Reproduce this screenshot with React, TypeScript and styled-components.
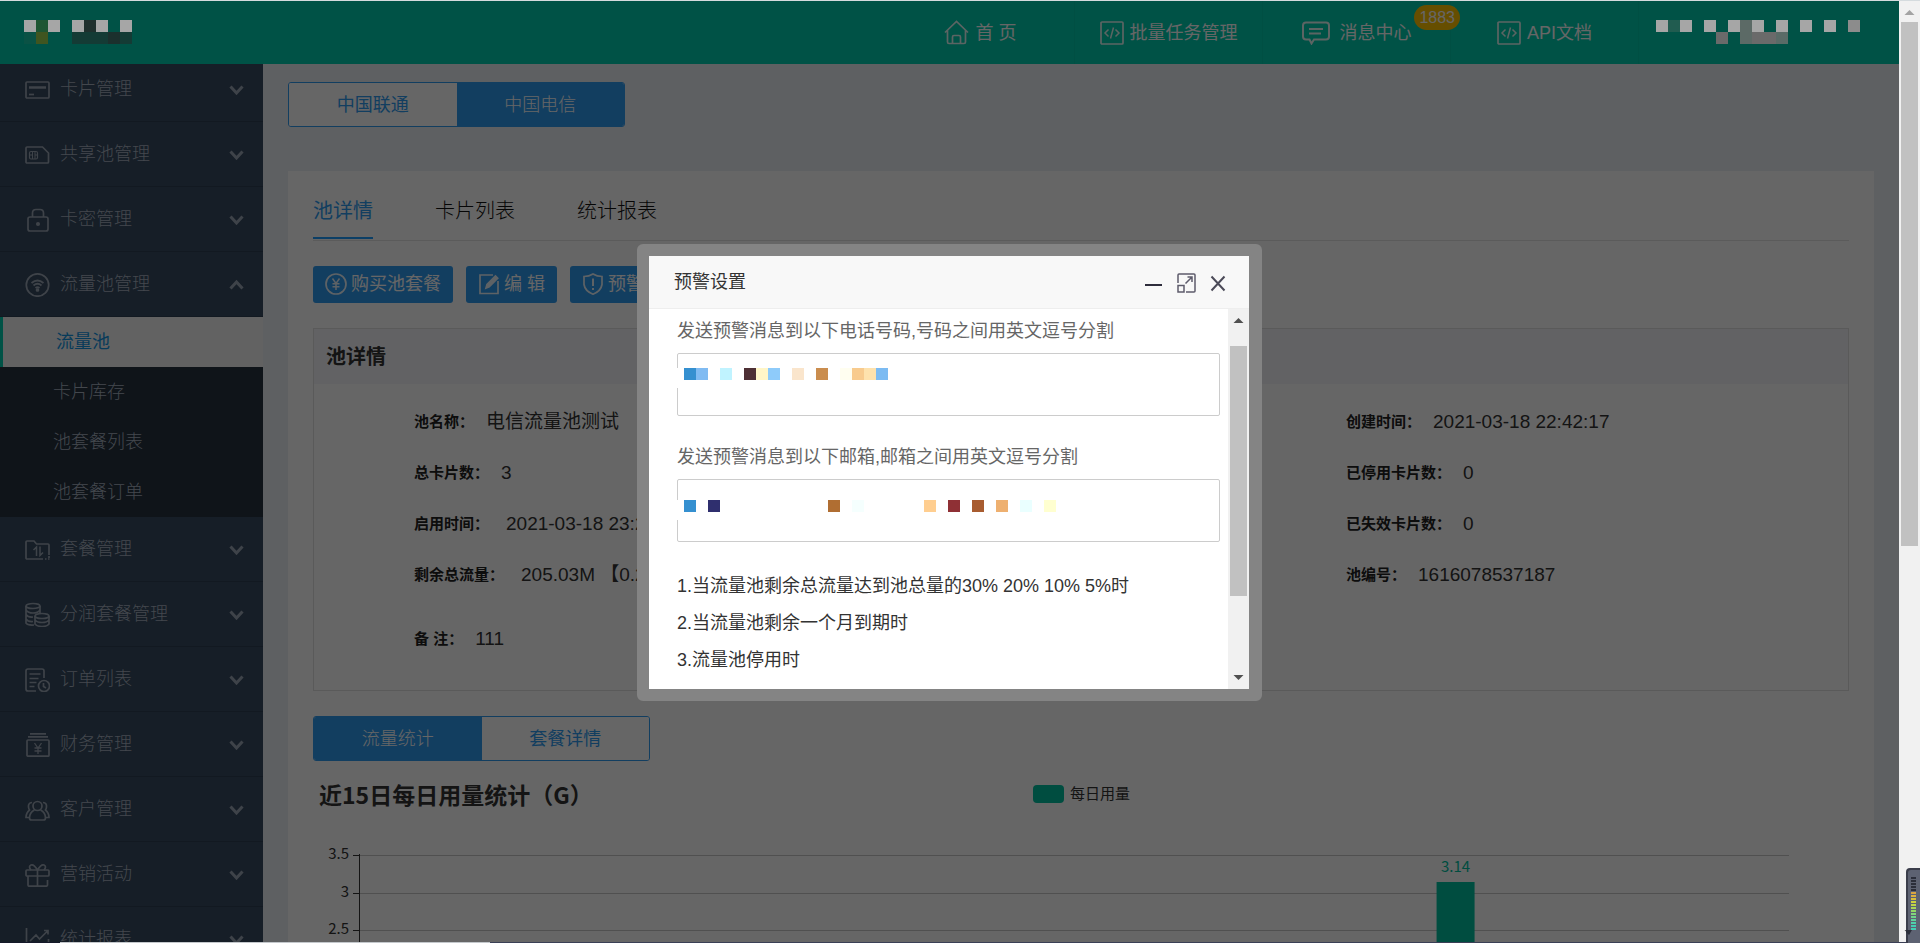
import React from 'react';
import styled, { createGlobalStyle } from 'styled-components';

const GlobalStyle = createGlobalStyle`
  *, *::before, *::after { box-sizing: border-box; }
  html, body { margin: 0; padding: 0; }
  body {
    font-family: "Liberation Sans", "Noto Sans CJK SC", sans-serif;
    font-size: 18px;
    line-height: 24px;
    color: #333;
  }
  a { color: inherit; text-decoration: none; }
  button, textarea { font: inherit; }
  button { cursor: pointer; }
`;

const Root = styled.div`
  display: grid;
  grid-template-columns: minmax(0, 1fr) 21px;
  height: 100vh;
  overflow: hidden;
  border-top: 1px solid #d5dbde;
`;

const Page = styled.div`
  display: flex;
  flex-direction: column;
  min-height: 0;
  background: #ebeff4;
`;

/* Header */
const Header = styled.header`
  display: flex;
  align-items: stretch;
  height: 63px;
  flex: none;
  background: #00cdaf;
  color: #fff;
`;

const Brand = styled.div`
  padding: 19px 0 0 24px;
  flex: 1;
`;

const Nav = styled.nav`
  display: flex;
`;

const NavLink = styled.a<{ $gap?: number }>`
  display: flex;
  align-items: center;
  justify-content: center;
  gap: ${(p) => p.$gap ?? 6}px;
  width: 188px;
  border-right: 1px solid #00c5a7;
  position: relative;
`;

const Badge = styled.span`
  position: absolute;
  top: 4px;
  right: -10px;
  z-index: 1;
  height: 25px;
  padding: 0 5px;
  border-radius: 13px;
  background: #ffc400;
  font-size: 16px;
  line-height: 25px;
`;

const Account = styled.div`
  width: 260px;
  padding: 19px 0 0 17px;
`;

/* Blocks that hide private text */
const MosaicGrid = styled.div`
  display: grid;
  grid-auto-rows: 12px;
  position: relative;
  z-index: 20;
  pointer-events: none;
`;

const MosaicRow = styled.div`
  display: flex;
`;

const MosaicCell = styled.i<{ $color: string }>`
  width: 12px;
  height: 12px;
  background: ${(p) => p.$color};
`;

function Mosaic({ rows }: { rows: Array<Record<number, string>> }) {
  return (
    <MosaicGrid aria-hidden="true">
      {rows.map((row, r) => {
        const last = Math.max(...Object.keys(row).map(Number));
        return (
          <MosaicRow key={r}>
            {Array.from({ length: last + 1 }, (_, i) => (
              <MosaicCell key={i} $color={row[i] ?? 'transparent'} />
            ))}
          </MosaicRow>
        );
      })}
    </MosaicGrid>
  );
}

/* Sidebar */
const Body = styled.div`
  display: flex;
  flex: 1;
  min-height: 0;
`;

const Sidebar = styled.aside`
  width: 263px;
  flex: none;
  overflow: hidden;
  background: #374b61;
  color: #a8b2c0;
  font-weight: 300;
`;

const MenuList = styled.ul`
  list-style: none;
  margin: -7px 0 0;
  padding: 0;
`;

const MenuItem = styled.a`
  display: flex;
  align-items: center;
  height: 65px;
  padding: 0 19px 0 25px;
  border-bottom: 1px solid #2f4054;
`;

const MenuText = styled.span`
  flex: 1;
  margin-left: 10px;
`;

const SubList = styled.ul`
  list-style: none;
  margin: 0;
  padding: 0;
  background: #263340;
`;

const SubLink = styled.a<{ $active?: boolean }>`
  display: block;
  height: 50px;
  padding-left: 53px;
  line-height: 50px;
  ${(p) =>
    p.$active &&
    `background: #f4f5f6; color: #1393e0; border-left: 3px solid #00cdaf; font-weight: 400;`}
`;

/* Content */
const Main = styled.main`
  flex: 1;
  min-width: 0;
  overflow: hidden;
  padding: 18px 25px 0;
`;

const Segmented = styled.div`
  display: inline-flex;
  width: 337px;
  height: 45px;
  border: 1px solid #2e9bf0;
  border-radius: 3px;
  background: #fff;
  overflow: hidden;
  vertical-align: top;
`;

const Segment = styled.button<{ $active?: boolean }>`
  flex: 1;
  border: 0;
  padding: 0;
  background: ${(p) => (p.$active ? '#2e9bf0' : '#fff')};
  color: ${(p) => (p.$active ? '#fff' : '#2e9bf0')};
  font-weight: ${(p) => (p.$active ? 300 : 400)};
`;

const Panel = styled.section`
  margin-top: 44px;
  padding: 14px 25px 0;
  background: #fff;
`;

const Tabs = styled.div`
  display: flex;
  gap: 62px;
  padding-bottom: 1px;
  border-bottom: 1px solid #e4e4e4;
`;

const Tab = styled.button<{ $active?: boolean }>`
  height: 54px;
  padding: 0;
  border: 0;
  border-bottom: 2px solid ${(p) => (p.$active ? '#1e9fff' : 'transparent')};
  background: none;
  color: ${(p) => (p.$active ? '#2e9bf0' : '#111')};
  font-size: 20px;
  font-weight: ${(p) => (p.$active ? 400 : 300)};
`;

const Toolbar = styled.div`
  display: flex;
  gap: 13px;
  margin-top: 25px;
`;

const ToolButton = styled.button`
  display: flex;
  align-items: center;
  gap: 4px;
  height: 37px;
  padding: 0 12px 2px;
  border: 0;
  border-radius: 3px;
  background: #2e9bf0;
  color: #fff;
`;

const Card = styled.section`
  margin-top: 25px;
  border: 1px solid #e0e0e0;
`;

const CardTitle = styled.h2`
  margin: 0;
  height: 55px;
  padding-left: 12px;
  background: #f4f6fa;
  font-size: 20px;
  line-height: 56px;
`;

const Details = styled.dl`
  display: grid;
  grid-template-columns: 932fr 502fr;
  grid-auto-rows: 51px;
  margin: 0;
  padding: 12px 0 27px 100px;
  height: 306px;
`;

const Detail = styled.div<{ $last?: boolean }>`
  display: flex;
  align-items: center;
  gap: 12px;
  margin-top: ${(p) => (p.$last ? 26 : 0)}px;
  min-width: 0;
`;

const DetailLabel = styled.dt`
  color: #222;
  font-size: 15px;
  font-weight: bold;
`;

const DetailValue = styled.dd<{ $spaced?: boolean }>`
  margin: 0;
  padding-left: ${(p) => (p.$spaced ? 5 : 0)}px;
  font-size: 19px;
  color: #333;
`;

const StatSwitch = styled.div`
  margin-top: 25px;
`;

/* Chart */
const ChartHead = styled.div`
  display: grid;
  grid-template-columns: 720px 1fr;
  align-items: center;
  height: 66px;
`;

const ChartTitle = styled.h3`
  margin: 0;
  padding-left: 6px;
  font-family: "Noto Sans CJK SC", sans-serif;
  font-size: 23px;
`;

const Legend = styled.div`
  display: flex;
  align-items: center;
  gap: 6px;
  font-size: 15px;
`;

const Swatch = styled.i`
  width: 31px;
  height: 18px;
  border-radius: 4px;
  background: #00c0a0;
`;

const ChartRow = styled.div`
  display: flex;
  height: 120px;
  margin-top: 21px;
  padding-right: 60px;
`;

const AxisSvg = styled.svg`
  width: 47px;
  height: 120px;
  flex: none;
  overflow: visible;
  font-family: "Noto Sans CJK SC", sans-serif;
  font-size: 15px;
`;

const PlotSvg = styled(AxisSvg)`
  flex: 1;
  min-width: 0;
`;

/* Warning dialog */
const Overlay = styled.div`
  position: fixed;
  inset: 1px 21px 0 0;
  z-index: 10;
  display: flex;
  align-items: center;
  justify-content: center;
  background: rgba(0, 0, 0, 0.6);
`;

const Dialog = styled.section`
  display: flex;
  flex-direction: column;
  width: 625px;
  height: 457px;
  border: 12px solid #848484;
  border-right-width: 13px;
  border-radius: 6px;
  background: #fff;
`;

const DialogHead = styled.header`
  display: flex;
  align-items: center;
  height: 53px;
  padding: 0 23px 0 25px;
  border-bottom: 1px solid #eee;
  background: #f8f8f8;
`;

const DialogTitle = styled.h2`
  flex: 1;
  margin: 0;
  font-size: 18px;
  font-weight: 400;
`;

const HeadButton = styled.button`
  display: flex;
  margin-left: 14px;
  padding: 3px 0 0;
  border: 0;
  background: none;
`;

const DialogBody = styled.div`
  display: grid;
  grid-template-columns: minmax(0, 1fr) 21px;
  flex: 1;
  min-height: 0;
  overflow: hidden;
`;

const Form = styled.form`
  padding: 10px 8px 0 28px;
  min-width: 0;
`;

const Field = styled.div`
  position: relative;
  margin-bottom: 29px;
`;

const FieldLabel = styled.label`
  display: block;
  height: 34px;
  color: #666;
  white-space: nowrap;
`;

const TextBox = styled.textarea`
  display: block;
  width: 100%;
  height: 63px;
  padding: 8px 12px;
  border: 1px solid #ccc;
  border-radius: 2px;
  background: #fff;
  resize: none;
  outline: none;
`;

const Redaction = styled.div<{ $top: number }>`
  position: absolute;
  left: 0;
  top: ${(p) => p.$top}px;
  padding: 0 0 8px 7px;
  background: #fff;
`;

const Rules = styled.ol`
  list-style: none;
  margin: -3px 0 0;
  padding: 0;
  line-height: 37px;
  white-space: nowrap;
`;

/* Scroll bars */
const ScrollTrack = styled.div`
  display: flex;
  flex-direction: column;
  align-items: center;
  min-height: 0;
  background: #f1f1f1;
`;

const ArrowBox = styled.svg<{ $h: number }>`
  width: 21px;
  height: ${(p) => p.$h}px;
  flex: none;
`;

const Thumb = styled.div<{ $h: string }>`
  width: 17px;
  height: ${(p) => p.$h};
  background: #c1c1c1;
`;

const Spacer = styled.div`
  flex: 1;
`;

const Meter = styled.svg`
  position: fixed;
  right: 0;
  bottom: 0;
  width: 14px;
  height: 75px;
  z-index: 30;
`;

const StatusEdge = styled.div`
  position: fixed;
  left: 0;
  right: 0;
  bottom: 0;
  z-index: 25;
  height: 1px;
  background: linear-gradient(to right, #15192a 60px, #c4c8cc 60px, #c4c8cc 490px, #3a3f55 490px);
`;

/* Icons */
const Line = styled.svg.attrs<{ $w?: number; $h?: number; $stroke?: number }>((p) => ({
  fill: 'none',
  stroke: 'currentColor',
  strokeWidth: p.$stroke ?? 1.7,
}))`
  width: ${(p) => p.$w ?? 25}px;
  height: ${(p) => p.$h ?? 25}px;
  flex: none;
  opacity: 0.9;
`;

const menuIcons: Record<string, React.ReactNode> = {
  card: (
    <>
      <rect x="1" y="5" width="23" height="16" rx="1" />
      <path d="M4 10.500h17" strokeWidth="2.500" />
      <path d="M4 17.500h5" />
    </>
  ),
  sim: (
    <>
      <path d="M2 5h15.500l6 6v9q0 1-1 1H2q-1 0-1-1V6q0-1 1-1z" />
      <rect x="4.500" y="9.500" width="8" height="7.500" rx="1.500" strokeWidth="1.200" />
      <path d="M7.500 9.500v7.500M10 9.500v7.500M5 13h2.500M10 13h2.500" strokeWidth="1" />
    </>
  ),
  lock: (
    <>
      <rect x="3" y="10" width="20" height="14" rx="2" />
      <path d="M7.500 10V6q0-3.500 3.500-3.500h4q3.500 0 3.500 3.500v4" />
      <circle cx="13" cy="17" r="1.200" fill="currentColor" />
    </>
  ),
  wifi: (
    <>
      <circle cx="12.500" cy="13" r="11.200" />
      <path d="M6.500 11q6-5 12 0M8.500 13.500q4-3.500 8 0M10.500 16q2-1.600 4 0" strokeWidth="1.800" />
      <circle cx="12.500" cy="18" r="1" fill="currentColor" />
    </>
  ),
  folder: (
    <>
      <path d="M18 22H2q-1 0-1-1V5q0-1 1-1h7l2.500 3H23q1 0 1 1v10M20 22h1.500M23 22h1.500M24 19v2" />
      <path d="M8.500 13l3-3v9M15 9.500v9l3-3" strokeWidth="1.500" />
    </>
  ),
  coins: (
    <>
      <ellipse cx="8" cy="4" rx="7" ry="2.500" />
      <path d="M1 4v17q1.500 2.500 8 2M15 4v7M1 8q2 3 7 3t7-3M1 12.500q2 3 7 2.500M1 17q2 3 7 2.500" />
      <ellipse cx="17" cy="14" rx="7" ry="2.500" />
      <path d="M10 14v8q2 2.500 7 2.500t7-2.500v-8M10 18q2 2.500 7 2.500t7-2.500" />
    </>
  ),
  orders: (
    <>
      <path d="M11 24H3q-2 0-2-2V4q0-2 2-2h14q2 0 2 2v7" />
      <path d="M4.500 7h11M4.500 11.500h9M4.500 15.500h7M4.500 19.500h5" />
      <circle cx="19" cy="19" r="5.500" />
      <path d="M18.500 16v3.500l2.500 1.500" />
    </>
  ),
  finance: (
    <>
      <rect x="2" y="8" width="22" height="16.200" rx="1" />
      <path d="M3 4.800h20M5 1.800h16" />
      <path d="M9.500 11l3.500 5 3.500-5M13 16v6M9.500 16h7M9.500 19h7" strokeWidth="1.300" />
    </>
  ),
  people: (
    <>
      <circle cx="12.500" cy="9" r="4.500" />
      <path d="M9.500 13q-5 2.500-5 8 0 2 2 2h12q2 0 2-2 0-5.500-5-8" />
      <path d="M7 5.500q-4 .500-3.500 4.500 .200 2 1 3Q1 16 1 20.500h3M18 5.500q4 .500 3.500 4.500-.200 2-1 3Q24 16 24 20.500h-3" />
    </>
  ),
  gift: (
    <>
      <path d="M2 8h21q1 0 1 1v4q0 1-1 1H2q-1 0-1-1V9q0-1 1-1zM3 14v9q0 1.200 1 1.200h17q1.500 0 1.500-1.200v-5M12.500 8v16" />
      <path d="M12.500 8Q9 2 6 3q-3 1.500 0 5M12.500 8Q16 2 19 3q3 1.500 0 5" />
    </>
  ),
  stats: (
    <>
      <path d="M1.500 1v23H24" />
      <path d="M5 14l6-6 3.500 4L23 3.500M19 3.500h4v4M9 17v6M14 15v8M19 17v6M23.500 12v11" />
    </>
  ),
};

function Chevron({ up }: { up?: boolean }) {
  return (
    <Line viewBox="0 0 15 11" $w={15} $h={11} $stroke={3}>
      <path d={up ? 'M1.500 9.500l6-6.500 6 6.500' : 'M1.500 2.500l6 6.500 6-6.500'} />
    </Line>
  );
}

function CodeIcon() {
  return (
    <Line viewBox="0 0 24 24" $w={24} $h={24}>
      <rect x="1" y="1" width="22" height="22" rx="1" />
      <path d="M8.500 8.500L5 12l3.500 3.500M15.500 8.500L19 12l-3.500 3.500M13.500 6.500l-3 11" strokeWidth="1.500" />
    </Line>
  );
}

interface Entry {
  icon: string;
  label: string;
  children?: string[];
}

const menu: Entry[] = [
  { icon: 'card', label: '卡片管理' },
  { icon: 'sim', label: '共享池管理' },
  { icon: 'lock', label: '卡密管理' },
  { icon: 'wifi', label: '流量池管理', children: ['流量池', '卡片库存', '池套餐列表', '池套餐订单'] },
  { icon: 'folder', label: '套餐管理' },
  { icon: 'coins', label: '分润套餐管理' },
  { icon: 'orders', label: '订单列表' },
  { icon: 'finance', label: '财务管理' },
  { icon: 'people', label: '客户管理' },
  { icon: 'gift', label: '营销活动' },
  { icon: 'stats', label: '统计报表' },
];

interface DetailEntry {
  label: string;
  value: string;
  spaced?: boolean;
}

const details: DetailEntry[] = [
  { label: '池名称：', value: '电信流量池测试' },
  { label: '创建时间：', value: '2021-03-18 22:42:17' },
  { label: '总卡片数：', value: '3' },
  { label: '已停用卡片数：', value: '0' },
  { label: '启用时间：', value: '2021-03-18 23:2', spaced: true },
  { label: '已失效卡片数：', value: '0' },
  { label: '剩余总流量：', value: '205.03M 【0.2', spaced: true },
  { label: '池编号：', value: '1616078537187' },
];

const G = '#a6a6a6';
const brandMosaic = [
  { 0: G, 1: '#1d5532', 2: G, 4: G, 5: '#1f302d', 6: G, 8: G },
  { 0: '#0a5245', 1: '#3f5520', 4: '#143b35', 5: '#143b35', 6: '#143b35', 7: '#1b302d', 8: '#143b35' },
];
const userMosaic = [
  { 0: G, 1: '#215c50', 2: G, 4: G, 6: G, 7: '#5c6a66', 8: G, 10: G, 12: G, 14: G, 16: '#8c8c8c' },
  { 5: '#6a6a6a', 7: '#5c6a66', 8: '#6a6a6a', 9: '#6a6a6a', 10: '#5a6b67' },
];
const phoneMosaic = [
  {
    0: '#3590d0', 1: '#80bbf2', 3: '#c0f3ff', 5: '#4e3035', 6: '#fff6c8', 7: '#8ecbfa', 9: '#fae5cc',
    11: '#ca8d4e', 13: '#fffef0', 14: '#f8cb8e', 15: '#fee2ad', 16: '#7cbbf2',
  },
];
const mailMosaic = [
  {
    0: '#3590d0', 2: '#2f2f6e', 12: '#b06e32', 14: '#f5fffe', 20: '#ffce90', 22: '#8f3035', 24: '#a85c30',
    26: '#eeb070', 28: '#eaffff', 30: '#ffffd0',
  },
];

const ticks = [
  { y: 7, label: '3.5' },
  { y: 45, label: '3' },
  { y: 82, label: '2.5' },
];

const meterColors = [
  '#2b2e3a', '#2b2e3a', '#2b2e3a', '#2b2e3a', '#2b2e3a', '#d9a441', '#dcb040', '#d8bd3c', '#cfcf3c',
  '#bfd348', '#a9d657', '#93d866', '#82d67b', '#70d48b', '#60d29b', '#50d0aa', '#44ccb2', '#44ccb2',
];

export default function App() {
  return (
    <>
      <GlobalStyle />
      <Root>
        <Page>
          <Header>
            <Brand>
              <Mosaic rows={brandMosaic} />
            </Brand>
            <Nav>
              <NavLink href="#home">
                <Line viewBox="0 0 25 25">
                  <path d="M1 12.500L12.500 1.500 24 12.500M3.500 10.500V22q0 1.500 1.500 1.500h15q1.500 0 1.500-1.500V10.500M8.500 23.500V17q0-1.500 1.500-1.500h5q1.500 0 1.500 1.500v6.500" />
                </Line>
                首 页
              </NavLink>
              <NavLink href="#tasks">
                <CodeIcon />
                批量任务管理
              </NavLink>
              <NavLink href="#messages" $gap={10}>
                <Line viewBox="0 0 28 24" $w={28} $h={24} $stroke={2}>
                  <path d="M4 1.500h20q3 0 3 3v11q0 3-3 3H12l-2.500 4-2-4H4q-3 0-3-3v-11q0-3 3-3z" />
                  <path d="M7 8h14M7 12.500h12" />
                </Line>
                消息中心
                <Badge>1883</Badge>
              </NavLink>
              <NavLink href="#api">
                <CodeIcon />
                API文档
              </NavLink>
            </Nav>
            <Account>
              <Mosaic rows={userMosaic} />
            </Account>
          </Header>

          <Body>
            <Sidebar>
              <MenuList>
                {menu.map((m) => (
                  <li key={m.label}>
                    <MenuItem href={`#${m.icon}`}>
                      <Line viewBox="0 0 25 25">{menuIcons[m.icon]}</Line>
                      <MenuText>{m.label}</MenuText>
                      <Chevron up={!!m.children} />
                    </MenuItem>
                    {m.children && (
                      <SubList>
                        {m.children.map((c, i) => (
                          <li key={c}>
                            <SubLink href={`#pool-${i}`} $active={i === 0}>
                              {c}
                            </SubLink>
                          </li>
                        ))}
                      </SubList>
                    )}
                  </li>
                ))}
              </MenuList>
            </Sidebar>

            <Main>
              <Segmented>
                <Segment type="button">中国联通</Segment>
                <Segment type="button" $active>中国电信</Segment>
              </Segmented>

              <Panel>
                <Tabs>
                  <Tab type="button" $active>池详情</Tab>
                  <Tab type="button">卡片列表</Tab>
                  <Tab type="button">统计报表</Tab>
                </Tabs>

                <Toolbar>
                  <ToolButton type="button">
                    <Line viewBox="0 0 22 22" $w={22} $h={22}>
                      <circle cx="11" cy="11" r="10" />
                      <path d="M7.500 5.500L11 10.500l3.500-5M11 10.500V17M7.500 10.800h7M7.500 13.800h7" strokeWidth="1.500" />
                    </Line>
                    购买池套餐
                  </ToolButton>
                  <ToolButton type="button">
                    <Line viewBox="0 0 22 22" $w={22} $h={22}>
                      <path d="M15 2H2v18.500h18V8" />
                      <path d="M8 15l1-3.500L17.500 3l2.200 2.200-8.500 8.500z" fill="currentColor" />
                    </Line>
                    编 辑
                  </ToolButton>
                  <ToolButton type="button">
                    <Line viewBox="0 0 22 22" $w={22} $h={22}>
                      <path d="M11 1q4 2.500 9 2.500v8Q19 18 11 21.200 3 18 2 11.500v-8Q7 3.500 11 1z" />
                      <path d="M11 5.500v7.500M11 15v2" strokeWidth="2" />
                    </Line>
                    预警设置
                  </ToolButton>
                </Toolbar>

                <Card>
                  <CardTitle>池详情</CardTitle>
                  <Details>
                    {details.map((d) => (
                      <Detail key={d.label}>
                        <DetailLabel>{d.label}</DetailLabel>
                        <DetailValue $spaced={d.spaced}>{d.value}</DetailValue>
                      </Detail>
                    ))}
                    <Detail $last>
                      <DetailLabel>备 注：</DetailLabel>
                      <DetailValue>111</DetailValue>
                    </Detail>
                  </Details>
                </Card>

                <StatSwitch>
                  <Segmented>
                    <Segment type="button" $active>流量统计</Segment>
                    <Segment type="button">套餐详情</Segment>
                  </Segmented>
                </StatSwitch>

                <ChartHead>
                  <ChartTitle>近15日每日用量统计（G）</ChartTitle>
                  <Legend>
                    <Swatch />
                    每日用量
                  </Legend>
                </ChartHead>
                <ChartRow>
                  <AxisSvg>
                    {ticks.map((t) => (
                      <g key={t.label}>
                        <text x="36" y={t.y + 4} textAnchor="end" fill="#333">{t.label}</text>
                        <rect x="40" y={t.y} width="7" height="1" fill="#333" />
                      </g>
                    ))}
                    <rect x="46" y="6" width="1" height="114" fill="#333" />
                  </AxisSvg>
                  <PlotSvg>
                    {ticks.map((t) => (
                      <rect key={t.label} x="0" y={t.y} width="100%" height="1" fill="#c8c8c8" />
                    ))}
                    <svg x="76.667%" overflow="visible">
                      <rect x="-19" y="34" width="38" height="86" fill="#00c0a0" />
                      <text x="0" y="24" textAnchor="middle" fill="#00c0a0">3.14</text>
                    </svg>
                  </PlotSvg>
                </ChartRow>
              </Panel>
            </Main>
          </Body>
        </Page>

        <ScrollTrack aria-hidden="true">
          <ArrowBox $h={21}>
            <path d="M5.500 14l5-5 5 5z" fill="#a3a3a3" />
          </ArrowBox>
          <Thumb $h="55.6%" />
          <Spacer />
          <ArrowBox $h={21}>
            <path d="M5.500 8l5 5 5-5z" fill="#505050" />
          </ArrowBox>
        </ScrollTrack>
      </Root>

      <Overlay>
        <Dialog role="dialog" aria-labelledby="warn-title">
          <DialogHead>
            <DialogTitle id="warn-title">预警设置</DialogTitle>
            <HeadButton type="button" aria-label="最小化">
              <svg width="18" height="20">
                <rect x="0" y="11" width="17" height="2" fill="#2e2d3c" />
              </svg>
            </HeadButton>
            <HeadButton type="button" aria-label="最大化">
              <svg width="19" height="20" fill="none" stroke="#5d5b6b" strokeWidth="1.500">
                <path d="M1 10V2q0-1 1-1h15q1 0 1 1v16q0 1-1 1h-8" />
                <rect x="1" y="12.500" width="6" height="6.500" />
                <path d="M8.500 10.500L15 4M10.500 4H15v5" />
              </svg>
            </HeadButton>
            <HeadButton type="button" aria-label="关闭">
              <svg width="16" height="20" fill="none" stroke="#4b4a58" strokeWidth="2">
                <path d="M1.500 3.500l13 14M14.500 3.500l-13 14" />
              </svg>
            </HeadButton>
          </DialogHead>
          <DialogBody>
            <Form>
              <Field>
                <FieldLabel htmlFor="phones">发送预警消息到以下电话号码,号码之间用英文逗号分割</FieldLabel>
                <TextBox id="phones" />
                <Redaction $top={49}>
                  <Mosaic rows={phoneMosaic} />
                </Redaction>
              </Field>
              <Field>
                <FieldLabel htmlFor="mails">发送预警消息到以下邮箱,邮箱之间用英文逗号分割</FieldLabel>
                <TextBox id="mails" />
                <Redaction $top={55}>
                  <Mosaic rows={mailMosaic} />
                </Redaction>
              </Field>
              <Rules>
                <li>1.当流量池剩余总流量达到池总量的30% 20% 10% 5%时</li>
                <li>2.当流量池剩余一个月到期时</li>
                <li>3.流量池停用时</li>
              </Rules>
            </Form>
            <ScrollTrack aria-hidden="true">
              <ArrowBox $h={37}>
                <path d="M5.500 14l5-5 5 5z" fill="#505050" />
              </ArrowBox>
              <Thumb $h="66%" />
              <Spacer />
              <ArrowBox $h={21}>
                <path d="M5.500 7l5 5 5-5z" fill="#505050" />
              </ArrowBox>
            </ScrollTrack>
          </DialogBody>
        </Dialog>
      </Overlay>

      <StatusEdge />
      <Meter aria-hidden="true">
        <rect x="0" y="0" width="20" height="80" rx="4" fill="#3a3d4a" />
        <rect x="2" y="2" width="18" height="78" rx="3" fill="#5d6272" />
        {meterColors.map((c, i) => (
          <rect key={i} x="5" y={9 + i * 3} width="5" height="2" fill={c} />
        ))}
        <path d="M-2 62h8l-3 5z" fill="#2b2e3a" />
      </Meter>
    </>
  );
}
